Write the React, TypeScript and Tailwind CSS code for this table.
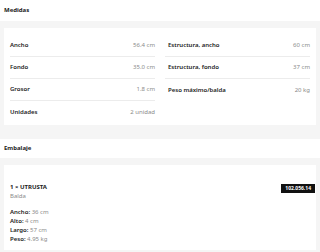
const dims: [string, string][][] = [
  [
    ["Ancho", "56.4 cm"],
    ["Fondo", "35.0 cm"],
    ["Grosor", "1.8 cm"],
    ["Unidades", "2 unidad"],
  ],
  [
    ["Estructura, ancho", "60 cm"],
    ["Estructura, fondo", "37 cm"],
    ["Peso máximo/balda", "20 kg"],
  ],
];

const pkg: [string, string][] = [
  ["Ancho", "36 cm"],
  ["Alto", "4 cm"],
  ["Largo", "57 cm"],
  ["Peso", "4.95 kg"],
];

function DimColumn({ rows, indent }: { rows: [string, string][]; indent?: boolean }) {
  return (
    <div className="flex flex-col">
      {rows.map(([label, value], i) => (
        <div
          key={label}
          className={`flex h-[22px] items-center justify-between ${i < rows.length - 1 ? "border-b border-[#ececec]" : ""}`}
        >
          <span className={`font-semibold text-[#222] ${indent ? "pl-[3px]" : ""}`}>{label}</span>
          <span className="text-[#8a8a8a]">{value}</span>
        </div>
      ))}
    </div>
  );
}

export default function App() {
  return (
    <div
      className="h-[252px] w-[320px] overflow-hidden bg-white text-[6px] leading-[9px]"
      style={{ fontFamily: '"Noto Sans", Arial, sans-serif' }}
    >
      <div className="flex h-[21px] items-center px-1 font-bold text-[#222]">Medidas</div>
      <div className="bg-[#f5f5f5] px-1 pt-[7px] pb-[14px]">
        <div className="grid grid-cols-2 gap-x-[10px] bg-white px-[6px] pt-[7px] pb-[2px]">
          <DimColumn rows={dims[0]} />
          <DimColumn rows={dims[1]} indent />
        </div>
      </div>
      <div className="flex h-[19px] items-center px-1 font-bold text-[#222]">Embalaje</div>
      <div className="bg-[#f5f5f5] px-1 pt-[7px] pb-[3px]">
        <div className="flex items-start justify-between bg-white pt-[18px] pb-[6px] pl-[6px] pr-[1px]">
          <div className="flex flex-col">
            <span className="font-bold text-[#222]">1 × UTRUSTA</span>
            <span className="text-[#8a8a8a]">Balda</span>
            <div className="mt-[7px] flex flex-col">
              {pkg.map(([label, value]) => (
                <span key={label} className="text-[#8a8a8a]">
                  <span className="font-semibold text-[#222]">{label}:</span> {value}
                </span>
              ))}
            </div>
          </div>
          <span className="mt-[1px] bg-[#111] px-[4px] text-[5px] leading-[9px] font-bold text-white">
            102.056.14
          </span>
        </div>
      </div>
    </div>
  );
}
